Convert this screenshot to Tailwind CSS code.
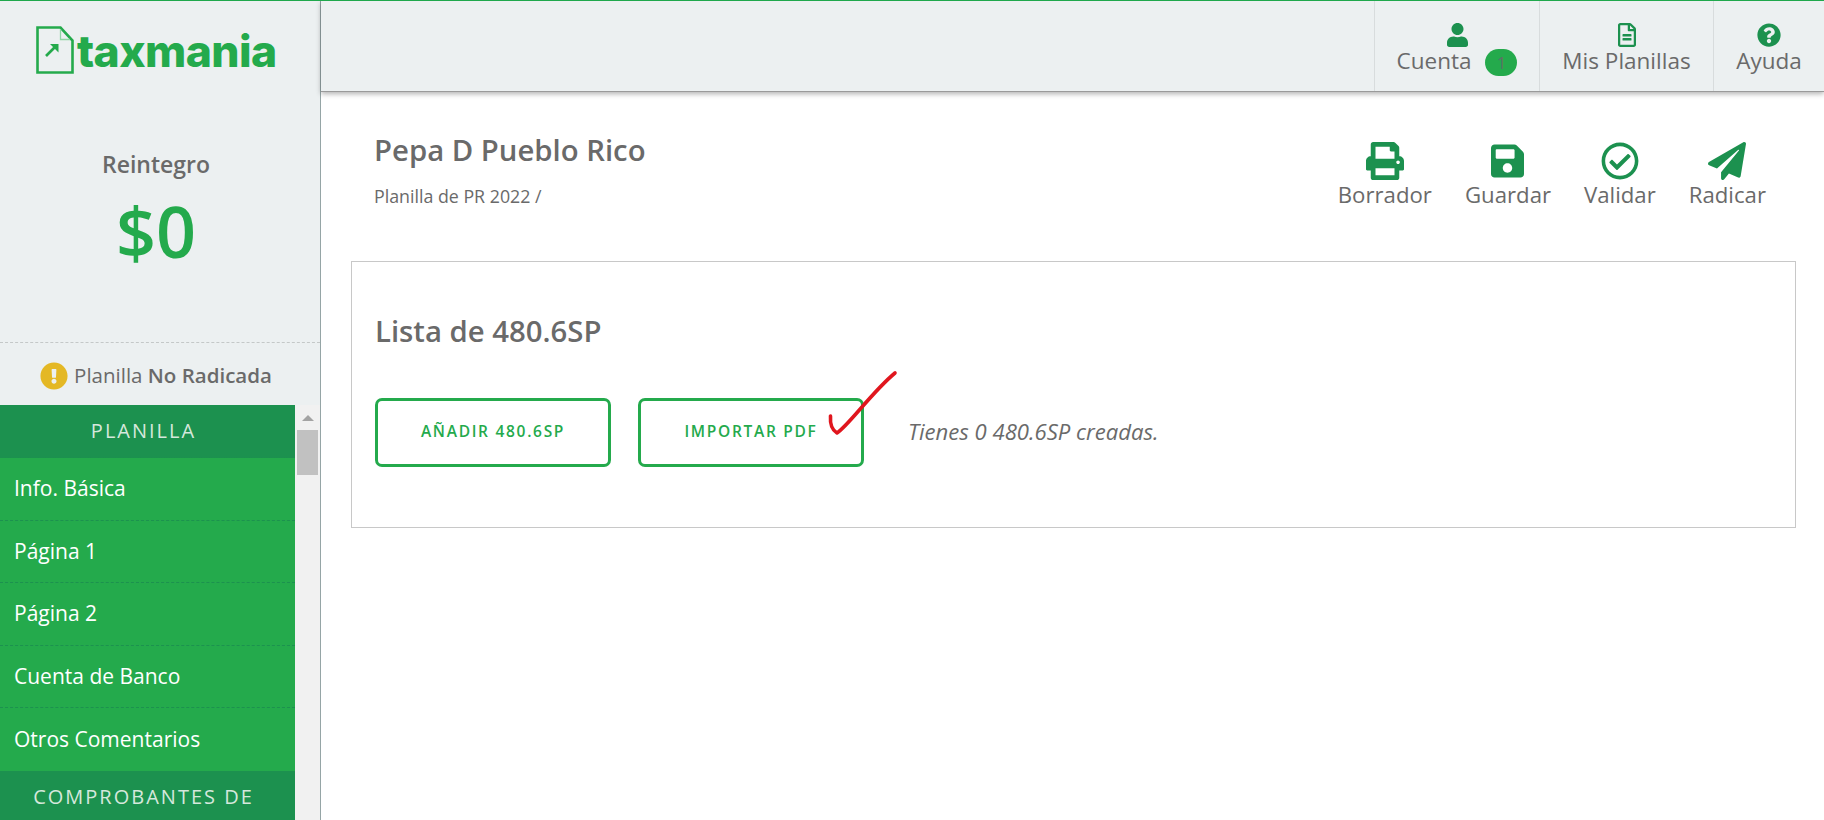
<!DOCTYPE html>
<html lang="es">
<head>
<meta charset="utf-8">
<script src="https://cdn.jsdelivr.net/npm/@tailwindcss/browser@4"></script>
<title>taxmania</title>
</head>
<body class="font-['Open_Sans',sans-serif] text-[#6a6a6a] bg-white overflow-hidden">
<div class="relative flex w-[1824px] h-[820px] overflow-hidden border-t border-[#1fa84c]">
  <aside class="w-[321px] h-full shrink-0 flex flex-col bg-[#ecf0f1] border-r border-[#95a5a6]">
    <div class="h-[342px] flex flex-col items-center pr-[8px] border-b border-dashed border-[#c4c8c8]">
      <div class="mt-[25px] flex items-end h-[48px] self-start ml-[35px]">
        <svg class="w-[40px] h-[48px]" viewBox="0 0 40 48" fill="none">
          <path d="M2.5 1.5H25.5L37.5 14.5V46.5H2.5Z" stroke="#24aa4c" stroke-width="2.6"/>
          <path d="M25.5 3V13.5H35" stroke="#8fd6a4" stroke-width="1.3"/>
          <path d="M11 30L21 20" stroke="#24aa4c" stroke-width="2.6"/>
          <path d="M15 18H23.5V26.5Z" fill="#24aa4c"/>
        </svg>
        <span class="ml-[2px] mb-[-3px] text-[44.5px] leading-[52px] font-extrabold tracking-[-0.6px] font-['Inter',sans-serif] text-[#24aa4c]">taxmania</span>
      </div>
      <div class="mt-[74px] text-[23px] leading-[32px] font-semibold">Reintegro</div>
      <div class="mt-[10px] text-[70px] leading-[82px] font-semibold text-[#24aa4c]">$0</div>
    </div>
    <div class="h-[62px] flex items-center justify-center gap-[6px] text-[20.5px] pt-[3px] pr-[8px]">
      <svg class="w-[28px] h-[28px]" viewBox="0 0 512 512"><path fill="#e4b825" d="M504 256c0 136.997-111.043 248-248 248S8 392.997 8 256C8 119.083 119.043 8 256 8s248 111.083 248 248zm-248 50c-25.405 0-46 20.595-46 46s20.595 46 46 46 46-20.595 46-46-20.595-46-46-46zm-43.673-165.346l7.418 136c.347 6.364 5.609 11.346 11.982 11.346h48.546c6.373 0 11.635-4.982 11.982-11.346l7.418-136c.375-6.874-5.098-12.654-11.982-12.654h-63.383c-6.884 0-12.356 5.78-11.981 12.654z"/></svg>
      <span>Planilla <b class="font-semibold">No Radicada</b></span>
    </div>
    <div class="flex-1 flex min-h-0 overflow-hidden">
      <nav class="w-[295px] h-full bg-[#24aa4c] text-white text-[21px]">
        <div class="h-[53px] flex items-center justify-center pr-[8px] bg-[#1c914f] text-[20px] text-[#d5e8dc] tracking-[2px] border-b border-dashed border-[#1c914f]">PLANILLA</div>
        <div class="h-[62.5px] flex items-center pl-[14px] border-b border-dashed border-[#1c914f]">Info. Básica</div>
        <div class="h-[62.5px] flex items-center pl-[14px] border-b border-dashed border-[#1c914f]">Página 1</div>
        <div class="h-[62.5px] flex items-center pl-[14px] border-b border-dashed border-[#1c914f]">Página 2</div>
        <div class="h-[62.5px] flex items-center pl-[14px] border-b border-dashed border-[#1c914f]">Cuenta de Banco</div>
        <div class="h-[62.5px] flex items-center pl-[14px]">Otros Comentarios</div>
        <div class="h-[53px] flex items-center justify-center pr-[8px] bg-[#1c914f] text-[20px] text-[#d5e8dc] tracking-[2px]">COMPROBANTES DE</div>
      </nav>
      <div class="w-[25px] h-full bg-[#f1f1f1] flex flex-col items-center">
        <div class="mt-[10px] w-0 h-0 border-x-[6px] border-x-transparent border-b-[6px] border-b-[#a3a3a3]"></div>
        <div class="mt-[9px] w-[21px] h-[45px] bg-[#c1c1c1]"></div>
      </div>
    </div>
  </aside>

  <main class="flex-1 min-w-0 flex flex-col">
    <header class="h-[91px] shrink-0 flex justify-end bg-[#ecf0f1] border-b border-[#9a9a9a] shadow-[0_2px_5px_rgba(0,0,0,0.3)] text-[22.5px]">
      <div class="w-[165px] flex flex-col items-center border-l border-[#d8dcdd]">
        <svg class="mt-[22px] w-[21px] h-[24px]" viewBox="0 0 448 512"><path fill="#1c914f" d="M224 256c70.7 0 128-57.3 128-128S294.7 0 224 0 96 57.3 96 128s57.3 128 128 128zm89.6 32h-16.7c-22.2 10.2-46.9 16-72.9 16s-50.6-5.8-72.9-16h-16.7C60.2 288 0 348.2 0 422.4V464c0 26.5 21.5 48 48 48h352c26.5 0 48-21.5 48-48v-41.6c0-74.2-60.2-134.4-134.4-134.4z"/></svg>
        <div class="flex items-start gap-[14px] h-[30px]">
          <span class="leading-[28px]">Cuenta</span>
          <span class="mt-[2px] w-[32px] h-[27px] rounded-full bg-[#24aa4c] flex items-center justify-center text-[16px] font-medium text-[#5f6f66]">1</span>
        </div>
      </div>
      <div class="w-[174px] flex flex-col items-center border-l border-[#d8dcdd]">
        <svg class="mt-[22px] w-[18px] h-[24px]" viewBox="0 0 384 512"><path fill="#1c914f" d="M288 248v28c0 6.6-5.4 12-12 12H108c-6.6 0-12-5.4-12-12v-28c0-6.6 5.4-12 12-12h168c6.6 0 12 5.4 12 12zm-12 72H108c-6.6 0-12 5.4-12 12v28c0 6.6 5.4 12 12 12h168c6.6 0 12-5.4 12-12v-28c0-6.6-5.4-12-12-12zm108-188.1V464c0 26.5-21.5 48-48 48H48c-26.5 0-48-21.5-48-48V48C0 21.5 21.5 0 48 0h204.1C264.8 0 277 5.1 286 14.1L369.9 98c9 8.9 14.1 21.2 14.1 33.9zm-128-80V128h76.1L256 51.9zM336 464V176H232c-13.3 0-24-10.7-24-24V48H48v416h288z"/></svg>
        <span class="leading-[28px]">Mis Planillas</span>
      </div>
      <div class="w-[111px] flex flex-col items-center border-l border-[#d8dcdd]">
        <svg class="mt-[22px] w-[24px] h-[24px]" viewBox="0 0 512 512"><path fill="#1c914f" d="M504 256c0 136.997-111.043 248-248 248S8 392.997 8 256C8 119.083 119.043 8 256 8s248 111.083 248 248zM262.655 90c-54.497 0-89.255 22.957-116.549 63.758-3.536 5.286-2.353 12.415 2.715 16.258l34.699 26.31c5.205 3.947 12.621 3.008 16.665-2.122 17.864-22.658 30.113-35.797 57.303-35.797 20.429 0 45.698 13.148 45.698 32.958 0 14.976-12.363 22.667-32.534 33.976C247.128 238.528 216 254.941 216 296v4c0 6.627 5.373 12 12 12h56c6.627 0 12-5.373 12-12v-1.333c0-28.462 83.186-29.647 83.186-106.667 0-58.002-60.165-102-116.531-102zM256 338c-25.365 0-46 20.635-46 46 0 25.364 20.635 46 46 46s46-20.636 46-46c0-25.365-20.635-46-46-46z"/></svg>
        <span class="leading-[28px]">Ayuda</span>
      </div>
    </header>

    <div class="flex justify-between items-start pl-[53px] pr-[58px] h-[169px]">
      <div>
        <h1 class="mt-[39px] text-[29.3px] leading-[38px] font-semibold">Pepa D Pueblo Rico</h1>
        <p class="mt-[15px] text-[17.8px] leading-[24px]">Planilla de PR 2022 /</p>
      </div>
      <div class="mt-[50px] flex gap-[33px] text-[22.2px] leading-[30px]">
        <div class="flex flex-col items-center">
          <svg class="w-[38px] h-[38px]" viewBox="0 0 512 512"><path fill="#1c914f" d="M448 192V77.25c0-8.49-3.37-16.62-9.37-22.63L393.37 9.37c-6-6-14.14-9.37-22.63-9.37H96C78.33 0 64 14.33 64 32v160c-35.35 0-64 28.65-64 64v112c0 8.84 7.16 16 16 16h48v96c0 17.67 14.33 32 32 32h320c17.67 0 32-14.33 32-32v-96h48c8.84 0 16-7.16 16-16V256c0-35.35-28.65-64-64-64zm-64 256H128v-96h256v96zm0-224H128V64h192v48c0 8.84 7.16 16 16 16h48v96zm48 72c-13.25 0-24-10.75-24-24 0-13.26 10.75-24 24-24s24 10.74 24 24c0 13.25-10.75 24-24 24z"/></svg>
          <span>Borrador</span>
        </div>
        <div class="flex flex-col items-center">
          <svg class="w-[33px] h-[38px]" viewBox="0 0 448 512"><path fill="#1c914f" d="M433.941 129.941l-83.882-83.882A48 48 0 0 0 316.118 32H48C21.49 32 0 53.49 0 80v352c0 26.51 21.49 48 48 48h352c26.51 0 48-21.49 48-48V163.882a48 48 0 0 0-14.059-33.941zM224 416c-35.346 0-64-28.654-64-64 0-35.346 28.654-64 64-64s64 28.654 64 64c0 35.346-28.654 64-64 64zm96-304.52V212c0 6.627-5.373 12-12 12H76c-6.627 0-12-5.373-12-12V108c0-6.627 5.373-12 12-12h228.52c3.183 0 6.235 1.264 8.485 3.515l3.48 3.48A11.996 11.996 0 0 1 320 111.48z"/></svg>
          <span>Guardar</span>
        </div>
        <div class="flex flex-col items-center">
          <svg class="w-[38px] h-[38px]" viewBox="0 0 512 512"><path fill="#1c914f" d="M256 8C119.033 8 8 119.033 8 256s111.033 248 248 248 248-111.033 248-248S392.967 8 256 8zm0 48c110.532 0 200 89.451 200 200 0 110.532-89.451 200-200 200-110.532 0-200-89.451-200-200 0-110.532 89.451-200 200-200m140.204 130.267l-22.536-22.718c-4.667-4.705-12.265-4.736-16.97-.068L215.346 303.697l-59.792-60.277c-4.667-4.705-12.265-4.736-16.97-.069l-22.719 22.536c-4.705 4.667-4.736 12.265-.068 16.971l90.781 91.516c4.667 4.705 12.265 4.736 16.97.068l172.589-171.204c4.704-4.668 4.734-12.266.067-16.971z"/></svg>
          <span>Validar</span>
        </div>
        <div class="flex flex-col items-center">
          <svg class="w-[38px] h-[38px]" viewBox="0 0 512 512"><path fill="#1c914f" d="M476 3.2L12.5 270.6c-18.1 10.4-15.8 35.6 2.2 43.2L121 358.4l287.3-253.2c5.5-4.9 13.3 2.6 8.6 8.3L176 407v80.5c0 23.6 28.5 32.9 42.5 15.8L282 426l124.6 52.2c14.2 6 30.4-2.9 33-18.2l72-432C515 7.8 493.3-6.8 476 3.2z"/></svg>
          <span>Radicar</span>
        </div>
      </div>
    </div>

    <section class="ml-[30px] w-[1445px] h-[267px] border border-[#c8c8c8] px-[23px]">
      <h2 class="mt-[50px] text-[29.3px] leading-[38px] font-semibold">Lista de 480.6SP</h2>
      <div class="mt-[48px] flex items-center">
        <button class="w-[236px] h-[69px] pb-[2px] border-[3px] border-[#24aa4c] rounded-[7px] text-[15.5px] font-semibold tracking-[1.7px] text-[#24aa4c]">AÑADIR 480.6SP</button>
        <button class="ml-[27px] w-[226px] h-[69px] pb-[2px] border-[3px] border-[#24aa4c] rounded-[7px] text-[15.5px] font-semibold tracking-[1.7px] text-[#24aa4c]">IMPORTAR PDF</button>
        <span class="ml-[44px] pb-[2px] text-[22.1px] italic">Tienes 0 480.6SP creadas.</span>
      </div>
    </section>
  </main>

  <svg class="absolute left-[822px] top-[365px] w-[80px] h-[75px]" viewBox="0 0 80 75" fill="none">
    <path d="M8.5 50C8 57 10 64 15 67C27 59 50 26 73 7" stroke="#e0161e" stroke-width="3.6" stroke-linecap="round" stroke-linejoin="round"/>
  </svg>
</div>
</body>
</html>
